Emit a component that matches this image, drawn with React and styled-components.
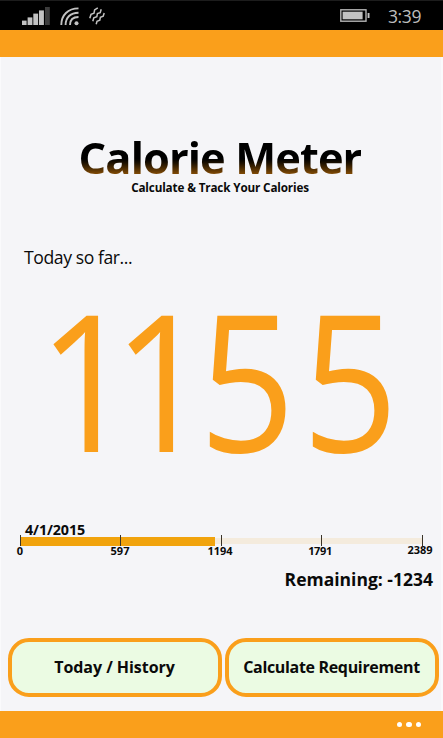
import React from 'react'
import styled, { createGlobalStyle } from 'styled-components'

const GlobalStyle = createGlobalStyle`
    * {
        box-sizing: border-box;
    }
    body {
        margin: 0;
        background: #f5f5f8;
    }
`

const Phone = styled.div`
    width: 443px;
    height: 738px;
    display: flex;
    flex-direction: column;
    overflow: hidden;
    background: #f5f5f8;
    color: #0a0a0a;
    font-family: "Open Sans", "Noto Sans", sans-serif;
`

const StatusBar = styled.header`
    height: 30px;
    flex: none;
    display: flex;
    align-items: center;
    justify-content: space-between;
    padding: 0 22px 0 21px;
    background: #000;
    border-top: 1px solid #1c1c1c;
`

const StatusGroup = styled.div`
    display: flex;
    align-items: center;
    gap: ${(props) => props.$gap || 0}px;
    height: 29px;
`

const Text = styled.span`
    display: inline-block;
    white-space: nowrap;
    font-size: ${(props) => props.$size}px;
    font-weight: ${(props) => (props.$bold ? 700 : 400)};
    line-height: ${(props) => props.$line || 20}px;
    letter-spacing: ${(props) => props.$spacing || 0}px;
`

const Clock = styled(Text)`
    color: #bdbdbd;
`

const OrangeBar = styled.div`
    height: 27px;
    flex: none;
    display: flex;
    align-items: center;
    justify-content: flex-end;
    gap: 4px;
    padding-right: 22px;
    background: #fa9f1b;
`

const Dot = styled.i`
    width: 5.4px;
    height: 5.4px;
    border-radius: 50%;
    background: #fff;
`

const Main = styled.main`
    flex: 1;
    display: flex;
    flex-direction: column;
    border-left: 1px solid #fafafc;
    border-right: 2px solid #fafafc;
`

const Brand = styled.div`
    height: 143px;
    padding: 71px 2px 0 0;
    display: flex;
    flex-direction: column;
    align-items: center;
`

const Title = styled.h1`
    margin: 0;
    white-space: nowrap;
    font-size: 43.4px;
    line-height: 60px;
    height: 52px;
    letter-spacing: -0.9px;
    color: transparent;
    background: linear-gradient(#000 31px, #1c1000 35px, #8a5006 47px);
    background-clip: text;
    -webkit-background-clip: text;
`

const Today = styled.section`
    padding: 45px 0 0 23px;
    height: 265px;
`

const Total = styled.div`
    display: flex;
    margin: 15px 0 0 14px;
    font-size: 190px;
    line-height: 190px;
    color: #fa9f1b;
`

const Digit = styled.span`
    flex: none;
    width: ${(props) => props.$width}px;
    transform: scaleX(${(props) => props.$stretch});
    transform-origin: 0 0;
`

const Progress = styled.section`
    height: 100px;
    padding: 55px 8px 0 19px;
`

const DateText = styled(Text)`
    display: block;
    padding-left: 5px;
    height: 15px;
`

const Track = styled.div`
    display: flex;
    align-items: center;
    width: 403px;
    height: 11px;
    background: linear-gradient(#f4ebdd, #f4ebdd) 0 3px / 100% 6px no-repeat;
`

const Fill = styled.div`
    height: 9px;
    margin-top: 2px;
    background: #f1a30d;
`

const Ticks = styled.div`
    position: absolute;
    display: flex;
    justify-content: space-between;
    width: 403px;
    height: 11px;
    margin-left: -0.5px;
`

const Tick = styled.i`
    width: 1px;
    background: #3a3428;
`

const Labels = styled.div`
    display: flex;
    justify-content: space-between;
    width: 403px;
`

const Label = styled.div`
    width: 0;
    display: flex;
    justify-content: center;
    margin-top: ${(props) => (props.$last ? -6 : -5)}px;
    padding-right: ${(props) => (props.$last ? 3 : 0)}px;
`

const Remaining = styled.div`
    display: flex;
    justify-content: flex-end;
    padding-right: 8px;
    height: 73px;
    padding-top: 4px;
`

const Buttons = styled.div`
    display: flex;
    gap: 3px;
    padding-left: 6.5px;
`

const Button = styled.button`
    width: 214px;
    height: 59px;
    padding: 0 0 1px;
    border: 4.5px solid #fa9f1b;
    border-radius: 21px;
    background: #ebfbe3;
    color: #0a0a0a;
    font-family: inherit;
`

function SignalIcon() {
    return (
        <svg width="29" height="19" viewBox="0 0 29 19" fill="#c2c2c2">
            <rect x="1" y="14.6" width="4.6" height="4.4" />
            <rect x="6.6" y="11.4" width="4.8" height="7.6" />
            <rect x="12.3" y="7.6" width="4.8" height="11.4" />
            <rect x="18" y="4.4" width="4.9" height="14.6" />
            <rect x="24" y="1" width="4.8" height="18" fill="#3c3c3c" />
        </svg>
    )
}

function WifiIcon() {
    return (
        <svg width="20" height="20" viewBox="0 0 20 20" fill="none" stroke="#c2c2c2" strokeWidth="1.9">
            <path d="M1.3 19C1.3 9 8 2.4 18.5 2.4" />
            <path d="M5.6 19C5.6 11.5 10.5 6.7 18.5 6.7" />
            <path d="M10 19C10 14 13 11 18.5 11" />
            <circle cx="16.5" cy="17.2" r="2" fill="#c2c2c2" stroke="none" />
        </svg>
    )
}

function VibrateIcon() {
    return (
        <svg width="16" height="18" viewBox="0 0 16 18" fill="none" stroke="#c2c2c2" strokeWidth="1.5">
            <path d="M0.8 11.2L2 7.4L5 6.2L5.6 3L8.8 0.8" />
            <path d="M3.8 14.2L4.8 10.8L7.8 9.8L8.4 6.6L11.2 5.6L12.2 2.2" />
            <path d="M7.2 17.2L8 14.2L10.8 13.2L11.4 10.2L14.2 9.2L15.2 6" />
        </svg>
    )
}

function BatteryIcon() {
    return (
        <svg width="30" height="13" viewBox="0 0 30 13">
            <rect x="0.8" y="0.8" width="25.2" height="11.4" fill="none" stroke="#b4b4b4" strokeWidth="1.4" />
            <rect x="2.6" y="2.7" width="20" height="7.6" fill="#c2c2c2" />
            <rect x="27.6" y="4" width="1.9" height="5" fill="#c2c2c2" />
        </svg>
    )
}

const consumed = 1155
const goal = 2389
const marks = [0, 597, 1194, 1791, 2389]
const digits = [
    { value: '1', width: 74.5, stretch: 0.9 },
    { value: '1', width: 86.5, stretch: 0.9 },
    { value: '5', width: 102.8, stretch: 0.885 },
    { value: '5', width: 102.8, stretch: 0.885 },
]

export default function App() {
    return (
        <Phone>
            <GlobalStyle />
            <StatusBar>
                <StatusGroup $gap={9.5}>
                    <SignalIcon />
                    <WifiIcon />
                    <VibrateIcon />
                </StatusGroup>
                <StatusGroup $gap={18}>
                    <BatteryIcon />
                    <Clock $size={17.5} $spacing={-0.4}>3:39</Clock>
                </StatusGroup>
            </StatusBar>
            <OrangeBar />
            <Main>
                <Brand>
                    <Title>Calorie Meter</Title>
                    <Text $size={11.7} $bold $line={14} $spacing={-0.14}>Calculate &amp; Track Your Calories</Text>
                </Brand>
                <Today>
                    <Text $size={17.6} $line={24} $spacing={-0.42}>Today so far...</Text>
                    <Total>
                        {digits.map((digit, index) => (
                            <Digit key={index} $width={digit.width} $stretch={digit.stretch}>
                                {digit.value}
                            </Digit>
                        ))}
                    </Total>
                </Today>
                <Progress>
                    <DateText $size={14.3} $bold $spacing={-0.1}>4/1/2015</DateText>
                    <Track>
                        <Fill style={{ width: `${(consumed / goal) * 100}%` }} />
                        <Ticks>
                            {marks.map((mark) => <Tick key={mark} />)}
                        </Ticks>
                    </Track>
                    <Labels>
                        {marks.map((mark) => (
                            <Label key={mark} $last={mark === goal}>
                                <Text $size={11} $bold $spacing={mark === 1791 ? -0.4 : 0}>{mark}</Text>
                            </Label>
                        ))}
                    </Labels>
                </Progress>
                <Remaining>
                    <Text $size={17.5} $bold $line={20}>Remaining: -1234</Text>
                </Remaining>
                <Buttons>
                    <Button><Text $size={16} $bold $spacing={-0.05}>Today / History</Text></Button>
                    <Button><Text $size={16} $bold $spacing={-0.33}>Calculate Requirement</Text></Button>
                </Buttons>
            </Main>
            <OrangeBar>
                <Dot />
                <Dot />
                <Dot />
            </OrangeBar>
        </Phone>
    )
}
